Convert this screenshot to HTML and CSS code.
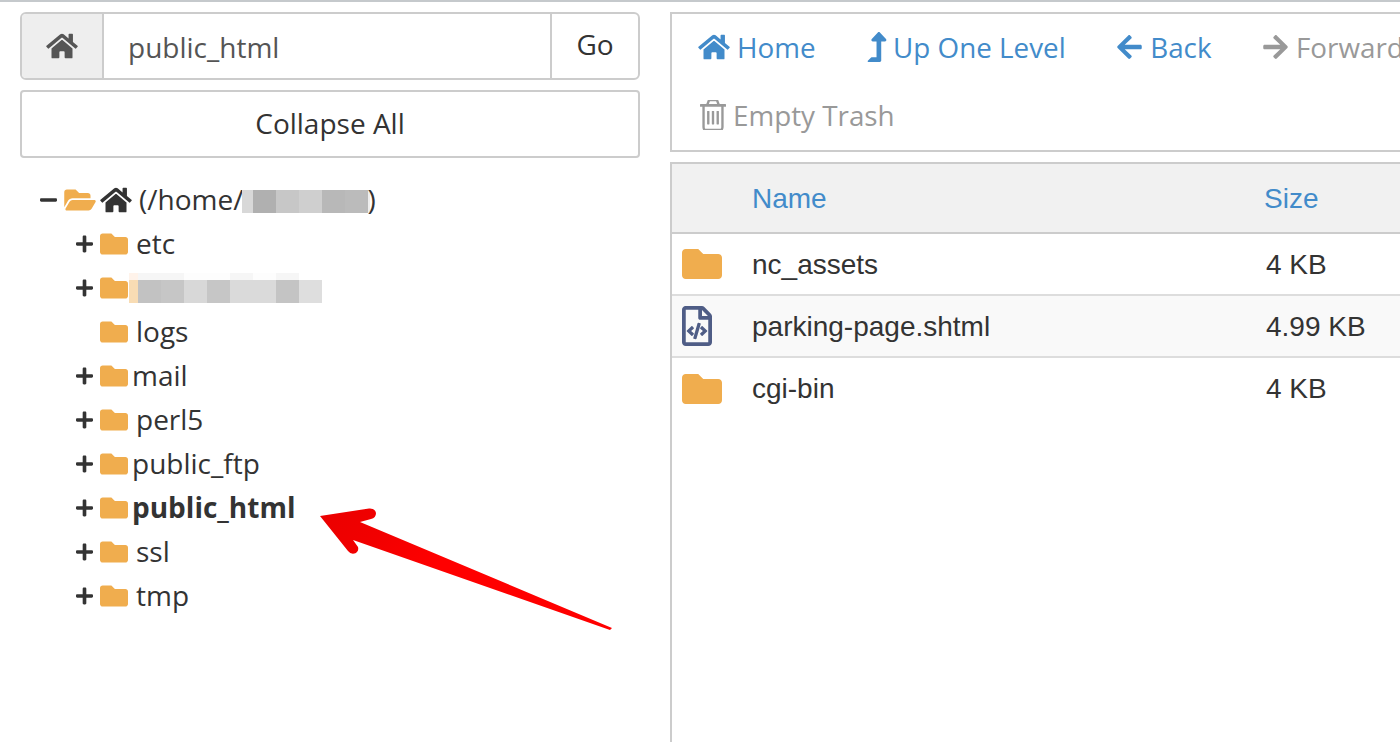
FILE: index.html
```html
<!DOCTYPE html>
<html lang="en">

<head>
    <meta charset="UTF-8">
    <title>File Manager</title>
    <link rel="stylesheet" href="styles.css">
</head>

<body>
    <svg class="sprites" xmlns="http://www.w3.org/2000/svg">
        <symbol id="i-home" viewBox="0 0 576 512"><path d="M280.37 148.26L96 300.11V464a16 16 0 0 0 16 16l112.06-.29a16 16 0 0 0 15.92-16V368a16 16 0 0 1 16-16h64a16 16 0 0 1 16 16v95.64a16 16 0 0 0 16 16.05L464 480a16 16 0 0 0 16-16V300L295.67 148.26a12.19 12.19 0 0 0-15.3 0zM571.6 251.47L488 182.56V44.05a12 12 0 0 0-12-12h-56a12 12 0 0 0-12 12v72.61L318.47 43a48 48 0 0 0-61 0L4.34 251.47a12 12 0 0 0-1.6 16.9l25.5 31A12 12 0 0 0 45.15 301l235.22-193.74a12.19 12.19 0 0 1 15.3 0L530.9 301a12 12 0 0 0 16.9-1.6l25.5-31a12 12 0 0 0-1.7-16.93z"/></symbol>
        <symbol id="i-folder" viewBox="0 0 512 512"><path d="M464 128H272l-64-64H48C21.49 64 0 85.49 0 112v288c0 26.51 21.49 48 48 48h416c26.51 0 48-21.49 48-48V176c0-26.51-21.49-48-48-48z"/></symbol>
        <symbol id="i-folder-open" viewBox="0 0 576 512"><path d="M572.694 292.093L500.27 416.248A63.997 63.997 0 0 1 444.989 448H45.025c-18.523 0-30.064-20.093-20.731-36.093l72.424-124.155A64 64 0 0 1 152 256h399.964c18.523 0 30.064 20.093 20.73 36.093zM152 224h328v-48c0-26.51-21.49-48-48-48H272l-64-64H48C21.49 64 0 85.49 0 112v278.046l69.077-118.418C86.214 242.25 117.989 224 152 224z"/></symbol>
        <symbol id="i-plus" viewBox="0 0 448 512"><path d="M416 208H272V64c0-17.67-14.33-32-32-32h-32c-17.67 0-32 14.33-32 32v144H32c-17.67 0-32 14.33-32 32v32c0 17.67 14.33 32 32 32h144v144c0 17.67 14.33 32 32 32h32c17.67 0 32-14.33 32-32V304h144c17.67 0 32-14.33 32-32v-32c0-17.67-14.33-32-32-32z"/></symbol>
        <symbol id="i-minus" viewBox="0 0 448 512"><path d="M416 208H32c-17.67 0-32 14.33-32 32v32c0 17.67 14.33 32 32 32h384c17.67 0 32-14.33 32-32v-32c0-17.67-14.33-32-32-32z"/></symbol>
        <symbol id="i-up" viewBox="0 0 320 512"><path d="M313.553 119.669L209.587 7.666c-9.485-10.214-25.676-10.229-35.174 0L70.438 119.669C56.232 134.969 67.062 160 88.025 160H152v272H68.024a11.996 11.996 0 0 0-8.485 3.515l-56 56C-4.021 499.074 1.333 512 12.024 512H208c13.255 0 24-10.745 24-24V160h63.966c20.878 0 31.851-24.969 17.587-40.331z"/></symbol>
        <symbol id="i-left" viewBox="0 0 448 512"><path d="M257.5 445.1l-22.2 22.2c-9.4 9.4-24.6 9.4-33.9 0L7 273c-9.4-9.4-9.4-24.6 0-33.9L201.4 44.7c9.4-9.4 24.6-9.4 33.9 0l22.2 22.2c9.5 9.5 9.3 25-.4 34.3L136.6 216H424c13.3 0 24 10.7 24 24v32c0 13.3-10.7 24-24 24H136.6l120.5 114.8c9.8 9.3 10 24.8.4 34.3z"/></symbol>
        <symbol id="i-right" viewBox="0 0 448 512"><path d="M190.5 66.9l22.2-22.2c9.4-9.4 24.6-9.4 33.9 0L441 239c9.4 9.4 9.4 24.6 0 33.9L246.6 467.3c-9.4 9.4-24.6 9.4-33.9 0l-22.2-22.2c-9.5-9.5-9.3-25 .4-34.3L311.4 296H24c-13.3 0-24-10.7-24-24v-32c0-13.3 10.7-24 24-24h287.4L190.9 101.2c-9.8-9.3-10-24.8-.4-34.3z"/></symbol>
        <symbol id="i-trash" viewBox="0 256 1408 1408" preserveAspectRatio="none"><path d="M512 800v576q0 14-9 23t-23 9h-64q-14 0-23-9t-9-23v-576q0-14 9-23t23-9h64q14 0 23 9t9 23zm256 0v576q0 14-9 23t-23 9h-64q-14 0-23-9t-9-23v-576q0-14 9-23t23-9h64q14 0 23 9t9 23zm256 0v576q0 14-9 23t-23 9h-64q-14 0-23-9t-9-23v-576q0-14 9-23t23-9h64q14 0 23 9t9 23zm128 724v-948h-896v948q0 22 7 40.5t14.5 27 10.5 8.5h832q3 0 10.5-8.5t14.5-27 7-40.5zm-672-1076h448l-48-117q-7-9-17-11h-317q-10 2-17 11zm928 32v64q0 14-9 23t-23 9h-96v948q0 83-47 143.5t-113 60.5h-832q-66 0-113-58.5t-47-141.5v-952h-96q-14 0-23-9t-9-23v-64q0-14 9-23t23-9h309l70-167q15-37 54-63t79-26h320q40 0 79 26t54 63l70 167h309q14 0 23 9t9 23z"/></symbol>
        <symbol id="i-code" viewBox="0 0 384 512"><path d="M149.9 349.1l-.2-.2-32.8-28.9 32.8-28.9c3.6-3.2 4-8.8.8-12.4l-.2-.2-17.4-18.6c-3.4-3.6-9-3.7-12.4-.4l-57.7 54.1c-3.7 3.5-3.7 9.4 0 12.8l57.7 54.1c1.6 1.5 3.8 2.4 6 2.4 2.4 0 4.8-1 6.4-2.8l17.4-18.6c3.3-3.5 3.1-9.1-.4-12.4zm220-251.2L286 14C277 5 264.8-.1 252.1-.1H48C21.5 0 0 21.5 0 48v416c0 26.5 21.5 48 48 48h288c26.5 0 48-21.5 48-48V131.9c0-12.7-5.1-25-14.1-34zM256 51.9l76.1 76.1H256zM336 464H48V48h160v104c0 13.3 10.7 24 24 24h104zM209.6 214c-4.7-1.4-9.5 1.3-10.9 6L144 408.1c-1.4 4.7 1.3 9.5 6 10.9l24.4 7.1c4.7 1.4 9.5-1.4 10.9-6L240 231.9c1.4-4.7-1.3-9.5-6-10.9L209.6 214zm24.5 76.9l.2.2 32.8 28.9-32.8 28.9c-3.6 3.2-4 8.8-.8 12.4l.2.2 17.4 18.6c3.3 3.5 8.9 3.7 12.4.4l57.7-54.1c3.7-3.5 3.7-9.4 0-12.8l-57.7-54.1c-3.5-3.3-9.1-3.2-12.4.4l-17.4 18.6c-3.3 3.5-3.1 9.1.4 12.4z"/></symbol>
    </svg>

    <div class="page">
        <!-- Left column: path box and tree -->
        <aside class="sidebar">
            <form class="path-group">
                <span class="path-addon"><svg class="ico ico-addon"><use href="#i-home"/></svg></span>
                <span class="path-input">public_html</span>
                <span class="path-go">Go</span>
            </form>
            <button type="button" class="btn-collapse">Collapse All</button>

            <ul class="tree">
                <li class="tree-root">
                    <svg class="ico ico-toggle"><use href="#i-minus"/></svg>
                    <svg class="ico ico-open"><use href="#i-folder-open"/></svg>
                    <svg class="ico ico-roothome"><use href="#i-home"/></svg>
                    <span class="root-label">(/home/</span><span class="redact redact-home"></span><span class="root-label">)</span>
                </li>
                <li class="tree-item">
                    <svg class="ico ico-plus"><use href="#i-plus"/></svg>
                    <svg class="ico ico-folder"><use href="#i-folder"/></svg>
                    <span class="name">etc</span>
                </li>
                <li class="tree-item">
                    <svg class="ico ico-plus"><use href="#i-plus"/></svg>
                    <svg class="ico ico-folder"><use href="#i-folder"/></svg>
                    <span class="redact redact-domain"></span>
                </li>
                <li class="tree-item no-children">
                    <svg class="ico ico-folder"><use href="#i-folder"/></svg>
                    <span class="name">logs</span>
                </li>
                <li class="tree-item">
                    <svg class="ico ico-plus"><use href="#i-plus"/></svg>
                    <svg class="ico ico-folder"><use href="#i-folder"/></svg>
                    <span class="name tight">mail</span>
                </li>
                <li class="tree-item">
                    <svg class="ico ico-plus"><use href="#i-plus"/></svg>
                    <svg class="ico ico-folder"><use href="#i-folder"/></svg>
                    <span class="name">perl5</span>
                </li>
                <li class="tree-item">
                    <svg class="ico ico-plus"><use href="#i-plus"/></svg>
                    <svg class="ico ico-folder"><use href="#i-folder"/></svg>
                    <span class="name tight">public_ftp</span>
                </li>
                <li class="tree-item current">
                    <svg class="ico ico-plus"><use href="#i-plus"/></svg>
                    <svg class="ico ico-folder"><use href="#i-folder"/></svg>
                    <span class="name tight">public_html</span>
                </li>
                <li class="tree-item">
                    <svg class="ico ico-plus"><use href="#i-plus"/></svg>
                    <svg class="ico ico-folder"><use href="#i-folder"/></svg>
                    <span class="name">ssl</span>
                </li>
                <li class="tree-item">
                    <svg class="ico ico-plus"><use href="#i-plus"/></svg>
                    <svg class="ico ico-folder"><use href="#i-folder"/></svg>
                    <span class="name">tmp</span>
                </li>
            </ul>
        </aside>

        <!-- Right column: toolbar and file list -->
        <main class="content">
            <nav class="toolbar">
                <a class="tool"><svg class="ico ico-home"><use href="#i-home"/></svg>Home</a>
                <a class="tool"><svg class="ico ico-up"><use href="#i-up"/></svg>Up One Level</a>
                <a class="tool"><svg class="ico ico-arrow"><use href="#i-left"/></svg>Back</a>
                <a class="tool disabled"><svg class="ico ico-arrow"><use href="#i-right"/></svg>Forward</a>
                <a class="tool disabled tool-trash"><svg class="ico ico-trash"><use href="#i-trash"/></svg>Empty Trash</a>
            </nav>

            <div class="files-wrap">
                <table class="files">
                    <thead>
                        <tr>
                            <th class="col-icon"></th>
                            <th class="col-name">Name</th>
                            <th class="col-size">Size</th>
                        </tr>
                    </thead>
                    <tbody>
                        <tr>
                            <td><svg class="ico ico-folder-lg"><use href="#i-folder"/></svg></td>
                            <td class="cell-text">nc_assets</td>
                            <td class="cell-text cell-size">4 KB</td>
                        </tr>
                        <tr class="odd">
                            <td><svg class="ico ico-file"><use href="#i-code"/></svg></td>
                            <td class="cell-text">parking-page.shtml</td>
                            <td class="cell-text cell-size">4.99 KB</td>
                        </tr>
                        <tr>
                            <td><svg class="ico ico-folder-lg"><use href="#i-folder"/></svg></td>
                            <td>cgi-bin</td>
                            <td class="cell-size">4 KB</td>
                        </tr>
                    </tbody>
                </table>
            </div>
        </main>
    </div>

    <!-- Red annotation arrow -->
    <svg class="callout" width="300" height="140" viewBox="0 0 300 140">
        <defs>
            <linearGradient id="arrowFill" x1="0" y1="0" x2="1" y2="0.4">
                <stop offset="0" stop-color="#ea0000"/>
                <stop offset="0.25" stop-color="#f20000"/>
                <stop offset="0.5" stop-color="#ff0000"/>
            </linearGradient>
        </defs>
        <path fill="url(#arrowFill)" d="M10 19 L59 11.5 Q65 11 66 16 Q66 21 61 22 L50 25 L302 131 L300 133 L43 43 L48 50 Q49 54 46 56 Q41 58 38 54 Z"/>
    </svg>
</body>

</html>
```

FILE: styles.css
```css
* {
    margin: 0;
    padding: 0;
    box-sizing: border-box;
}

html,
body {
    height: 100%;
    overflow: hidden;
}

body {
    position: relative;
    background-color: #fff;
    color: #333;
    font-family: 'Open Sans', sans-serif;
    font-size: 28px;
    border-top: 2px solid #c5c9cc;
}

.sprites {
    display: none;
}

.ico {
    display: block;
    flex: none;
    fill: currentColor;
}

.page {
    display: flex;
    height: 100%;
}

/* Left column */
.sidebar {
    width: 670px;
    flex: none;
    padding: 10px 30px 0 20px;
}

.path-group {
    display: flex;
    height: 68px;
    border: 2px solid #ccc;
    border-radius: 6px;
    overflow: hidden;
    color: #555;
}

.path-addon {
    width: 82px;
    display: flex;
    align-items: center;
    justify-content: center;
    background-color: #eee;
    border-right: 2px solid #ccc;
}

.ico-addon {
    width: 32px;
    height: 28px;
}

.path-input {
    flex: 1;
    padding-left: 24px;
    line-height: 66px;
}

.path-go {
    width: 88px;
    text-align: center;
    border-left: 2px solid #ccc;
    color: #333;
    line-height: 60px;
}

.btn-collapse {
    display: block;
    width: 100%;
    height: 68px;
    margin-top: 10px;
    background-color: #fff;
    border: 2px solid #ccc;
    border-radius: 4px;
    color: #333;
    font-family: inherit;
    font-size: inherit;
    padding-bottom: 2px;
}

/* Tree */
.tree {
    list-style: none;
    margin-top: 20px;
}

.tree li {
    display: flex;
    align-items: center;
    height: 44px;
}

.tree-root {
    padding-left: 20px;
}

.ico-toggle {
    width: 17px;
    height: 20px;
}

.ico-open {
    width: 32px;
    height: 28px;
    margin-left: 7px;
    color: #f0ad4e;
}

.ico-roothome {
    width: 32px;
    height: 28px;
    margin-left: 4px;
    margin-right: 7px;
}

.tree-item {
    padding-left: 56px;
}

.tree-item.no-children {
    padding-left: 80px;
}

.ico-plus {
    width: 17px;
    height: 20px;
    margin-right: 7px;
}

.ico-folder {
    width: 28px;
    height: 28px;
    color: #f0ad4e;
}

.root-label,
.name {
    line-height: 42px;
    margin-bottom: 2px;
}

.name {
    margin-left: 8px;
}

.name.tight {
    margin-left: 4px;
}

.current .name {
    font-weight: 700;
}

/* Blurred out names */
.redact {
    display: block;
    flex: none;
    height: 30px;
    background-repeat: no-repeat;
}

.redact-home {
    width: 128px;
    margin: -4px -3px 0 -1px;
    background-image:
        linear-gradient(to right, #d8d8d8 0 11px, #b0b0b0 11px 34px, #c7c7c7 34px 57px, #cfcfcf 57px 80px, #b8b8b8 80px 103px, #bbb 103px 126px, #eee 126px);
    background-position: 0 7px;
    background-size: 100% 23px;
}

.redact-domain {
    width: 193px;
    margin-left: 1px;
    background-image:
        linear-gradient(to right, #f8dcb4 0 9px, #c2c2c2 9px 32px, #c6c6c6 32px 55px, #d8d8d8 55px 78px, #c6c6c6 78px 101px, #dadada 101px 147px, #c4c4c4 147px 170px, #dedede 170px),
        linear-gradient(to right, #fff3ea 0 9px, #f6f6f6 9px 55px, #fdfdfd 55px 101px, #f6f6f6 101px 124px, #fdfdfd 124px 147px, #f6f6f6 147px 170px, #fff 170px);
    background-position: 0 7px, 0 0;
    background-size: 100% 23px, 100% 7px;
}

/* Right column */
.content {
    flex: 1;
    min-width: 0;
    display: flex;
    flex-direction: column;
    padding-top: 10px;
    overflow: hidden;
}

.toolbar {
    display: flex;
    flex-wrap: wrap;
    flex: none;
    width: 790px;
    height: 140px;
    padding: 0 0 0 26px;
    border: 2px solid #ccc;
    align-content: flex-start;
    column-gap: 51.5px;
    font-size: 27.8px;
}

.tool {
    display: flex;
    align-items: center;
    height: 66px;
    color: #428bca;
}

.tool.disabled {
    color: #999;
}

.tool-trash {
    margin-top: 2px;
    padding-left: 2px;
}

.ico-home {
    width: 32px;
    height: 28px;
    margin-right: 7px;
}

.ico-up {
    width: 20px;
    height: 30px;
    margin-right: 6px;
}

.ico-arrow {
    width: 25px;
    height: 28px;
    margin-right: 8px;
}

.ico-trash {
    width: 26px;
    height: 30px;
    margin-right: 7px;
}

.files-wrap {
    flex: 1;
    margin-top: 10px;
    border-left: 2px solid #ccc;
}

.files {
    width: 100%;
    border-collapse: collapse;
    table-layout: fixed;
    font-family: 'Liberation Sans', Arial, sans-serif;
    font-size: 28px;
}

.files thead tr {
    background-color: #f1f1f1;
    border-top: 2px solid #ccc;
    border-bottom: 2px solid #ccc;
}

.files th {
    height: 70px;
    padding-top: 1px;
    text-align: left;
    font-weight: 400;
    color: #428bca;
}

.col-icon {
    width: 80px;
}

.col-name {
    width: 512px;
}

.files td {
    height: 62px;
}

.files .cell-text {
    padding-top: 2px;
}

.files .cell-size {
    padding-left: 2px;
}

.files tbody tr {
    border-bottom: 2px solid #ddd;
}

.files tbody tr:last-child {
    border-bottom: 0;
}

.files .odd {
    background-color: #f9f9f9;
}

.ico-folder-lg {
    width: 40px;
    height: 40px;
    margin-left: 10px;
    color: #f0ad4e;
}

.ico-file {
    width: 30px;
    height: 40px;
    margin-left: 10px;
    color: #4f5d86;
}

/* Annotation */
.callout {
    position: absolute;
    left: 310px;
    top: 495px;
    overflow: visible;
}
```
